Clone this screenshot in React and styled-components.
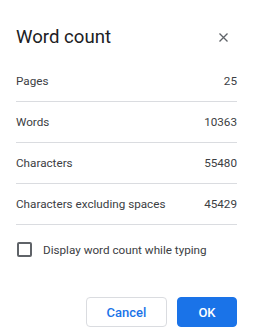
import React from "react";
import styled, { createGlobalStyle } from "styled-components";

const Global = createGlobalStyle`
  html, body { margin: 0; padding: 0; background: #fff; }
  body { font-family: Roboto, "Noto Sans", Arial, sans-serif; -webkit-font-smoothing: antialiased; }
`;

const Dialog = styled.div`
  width: 260px;
  height: 336px;
  box-sizing: border-box;
  padding: 25px 23px 0 16px;
  display: flex;
  flex-direction: column;
`;

const Header = styled.div`
  display: flex;
  align-items: center;
  justify-content: space-between;
  height: 24px;
  margin-bottom: 12px;
`;

const Title = styled.h1`
  margin: 0;
  font-size: 18.6px;
  line-height: 24px;
  font-weight: 400;
  color: #202124;
`;

const Close = styled.button`
  border: 0;
  background: none;
  padding: 0;
  margin-right: 9px;
  width: 9px;
  height: 9px;
  display: flex;
  cursor: pointer;
`;

const Row = styled.div`
  display: flex;
  justify-content: space-between;
  align-items: center;
  height: 40px;
  border-bottom: 1px solid #dadce0;
  font-size: 11.7px;
  color: #3c4043;
`;

const CheckRow = styled.label`
  display: flex;
  align-items: center;
  gap: 11px;
  margin-top: 17px;
  margin-left: 1px;
  font-size: 11.7px;
  color: #3c4043;
`;

const Box = styled.span`
  width: 11px;
  height: 11px;
  border: 2px solid #5f6368;
  border-radius: 2px;
`;

const Actions = styled.div`
  display: flex;
  justify-content: flex-end;
  gap: 10px;
  margin-top: 40px;
`;

const Button = styled.button`
  height: 30px;
  width: ${(p) => p.$w}px;
  border-radius: 4px;
  font-family: inherit;
  font-size: 13px;
  font-weight: 500;
  box-sizing: border-box;
  border: 1px solid ${(p) => (p.$primary ? "#1a73e8" : "#dadce0")};
  background: ${(p) => (p.$primary ? "#1a73e8" : "#fff")};
  color: ${(p) => (p.$primary ? "#fff" : "#1a73e8")};
  cursor: pointer;
`;

const rows = [
  ["Pages", "25"],
  ["Words", "10363"],
  ["Characters", "55480"],
  ["Characters excluding spaces", "45429"],
];

export default function App() {
  return (
    <>
      <Global />
      <Dialog>
        <Header>
          <Title>Word count</Title>
          <Close aria-label="Close">
            <svg width="9" height="9" viewBox="0 0 9 9">
              <path d="M0.5 0.5 L8.5 8.5 M8.5 0.5 L0.5 8.5" stroke="#5f6368" strokeWidth="1.3" />
            </svg>
          </Close>
        </Header>
        {rows.map(([k, v]) => (
          <Row key={k}>
            <span>{k}</span>
            <span>{v}</span>
          </Row>
        ))}
        <CheckRow>
          <Box />
          Display word count while typing
        </CheckRow>
        <Actions>
          <Button $w={81}>Cancel</Button>
          <Button $w={60} $primary>OK</Button>
        </Actions>
      </Dialog>
    </>
  );
}
